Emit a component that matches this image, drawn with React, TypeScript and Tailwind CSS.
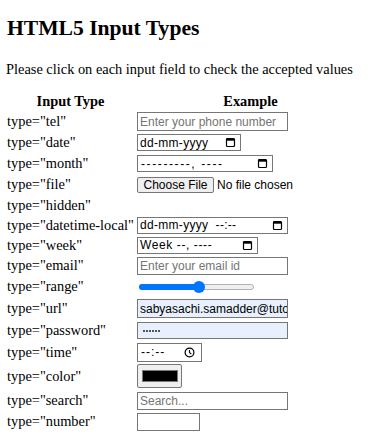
import React from "react";

type RowProps = {
    label: string;
    h: string;
    children?: React.ReactNode;
};

const Row = ({ label, h, children }: RowProps) => (
    <div className={"flex items-center " + h}>
        <div className="w-[130px] shrink-0 text-[14.4px] leading-[17px] whitespace-nowrap">{label}</div>
        <div className="flex items-center">{children}</div>
    </div>
);

const CalendarIcon = () => (
    <svg width="11" height="11" viewBox="0 0 11 11" fill="none">
        <rect x="1.5" y="1.5" width="8" height="8" rx="1" stroke="#000" strokeWidth="1.2" />
        <rect x="1.5" y="1.5" width="8" height="2.2" fill="#000" />
    </svg>
);

const ClockIcon = () => (
    <svg width="11" height="11" viewBox="0 0 11 11" fill="none">
        <circle cx="5.5" cy="5.5" r="4.4" stroke="#000" strokeWidth="1.2" />
        <path d="M5.5 3v2.6l1.8 1.4" stroke="#000" strokeWidth="1.1" />
    </svg>
);

// shared look of the input boxes (background set per field)
const box = "border border-[#767676] font-['Liberation_Sans',Arial,sans-serif] text-[12px] text-black flex items-center";

const App = () => {
    return (
        <div className="w-[371px] h-[442px] bg-white text-black font-['Liberation_Serif','Times_New_Roman',serif] overflow-hidden pl-[7px]">
            <h2 className="pt-[16px] text-[21.6px] leading-[25px] font-bold">HTML5 Input Types</h2>
            <p className="mt-[20px] -ml-[1px] text-[14.4px] leading-[17px]">
                Please click on each input field to check the accepted values
            </p>

            <div className="mt-[13px] flex flex-col">
                <div className="flex items-center h-[20px] text-[14.4px] leading-[17px] font-bold">
                    <div className="w-[130px] pr-[3px] text-center">Input Type</div>
                    <div className="w-[227px] text-center">Example</div>
                </div>

                <Row label={'type="tel"'} h="h-[21px]">
                    <input
                        type="text"
                        readOnly
                        placeholder="Enter your phone number"
                        className={box + " bg-white w-[151px] h-[19px] px-[2px] outline-none placeholder:text-[#757575]"}
                    />
                </Row>

                <Row label={'type="date"'} h="h-[21px]">
                    <div className={box + " bg-white w-[104px] h-[17px] pl-[2px] pr-[4px] justify-between"}>
                        <span className="tracking-[0.3px]">dd-mm-yyyy</span>
                        <CalendarIcon />
                    </div>
                </Row>

                <Row label={'type="month"'} h="h-[21px]">
                    <div className={box + " bg-white w-[136px] h-[17px] pl-[3px] pr-[4px] justify-between"}>
                        <span className="tracking-[1.6px]">---------, ----</span>
                        <CalendarIcon />
                    </div>
                </Row>

                <Row label={'type="file"'} h="h-[21px]">
                    <div className="flex items-center font-['Liberation_Sans',Arial,sans-serif] text-[12px]">
                        <div className="h-[16px] w-[77px] border border-[#767676] bg-[#efefef] rounded-[2px] flex items-center justify-center">
                            Choose File
                        </div>
                        <span className="ml-[3px]">No file chosen</span>
                    </div>
                </Row>

                <Row label={'type="hidden"'} h="h-[20px]" />

                <Row label={'type="datetime-local"'} h="h-[20px]">
                    <div className={box + " bg-white w-[151px] h-[17px] pl-[2px] pr-[4px] justify-between"}>
                        <span className="tracking-[0.3px] whitespace-pre">dd-mm-yyyy  --:--</span>
                        <CalendarIcon />
                    </div>
                </Row>

                <Row label={'type="week"'} h="h-[20px]">
                    <div className={box + " bg-white w-[121px] h-[17px] pl-[2px] pr-[4px] justify-between"}>
                        <span className="whitespace-pre tracking-[0.6px]">Week --, ----</span>
                        <CalendarIcon />
                    </div>
                </Row>

                <Row label={'type="email"'} h="h-[21px]">
                    <input
                        type="text"
                        readOnly
                        placeholder="Enter your email id"
                        className={box + " bg-white w-[151px] h-[18px] px-[2px] outline-none placeholder:text-[#757575]"}
                    />
                </Row>

                <Row label={'type="range"'} h="h-[21px]">
                    <div className="relative w-[118px] h-[12px] flex items-center">
                        <div className="ml-[2px] w-[115px] h-[6px] rounded-full bg-[#efefef] border border-[#b2b2b2]" />
                        <div className="absolute left-[2px] top-[3px] w-[60px] h-[6px] rounded-full bg-[#0075ff]" />
                        <div className="absolute left-[56px] top-0 w-[12px] h-[12px] rounded-full bg-[#0075ff]" />
                    </div>
                </Row>

                <Row label={'type="url"'} h="h-[23px]">
                    <div className={box + " bg-[#e8f0fe] w-[151px] h-[19px] px-[2px] overflow-hidden whitespace-nowrap"}>
                        sabyasachi.samadder@tutorialspoint.com
                    </div>
                </Row>

                <Row label={'type="password"'} h="h-[21px]">
                    <div className={box + " bg-[#e8f0fe] w-[151px] h-[17px] pl-[5px] gap-[1px]"}>
                        {[0, 1, 2, 3, 4, 5].map((i) => (
                            <span key={i} className="w-[2px] h-[2px] rounded-full bg-[#222]" />
                        ))}
                    </div>
                </Row>

                <Row label={'type="time"'} h="h-[22px]">
                    <div className={box + " bg-white w-[65px] h-[19px] pl-[3px] pr-[6px] justify-between"}>
                        <span className="tracking-[1px]">--:--</span>
                        <ClockIcon />
                    </div>
                </Row>

                <Row label={'type="color"'} h="h-[26px]">
                    <div className="w-[45px] h-[24px] border border-[#767676] bg-[#efefef] rounded-[2px] flex items-center justify-center">
                        <div className="w-[36px] h-[12px] bg-black border border-[#777777]" />
                    </div>
                </Row>

                <Row label={'type="search"'} h="h-[23px]">
                    <input
                        type="text"
                        readOnly
                        placeholder="Search..."
                        className={box + " bg-white w-[151px] h-[18px] px-[2px] outline-none placeholder:text-[#757575]"}
                    />
                </Row>

                <Row label={'type="number"'} h="h-[19px]">
                    <input
                        type="text"
                        readOnly
                        className={box + " bg-white w-[63px] h-[18px] px-[2px] outline-none"}
                    />
                </Row>
            </div>
        </div>
    );
};

export default App;
